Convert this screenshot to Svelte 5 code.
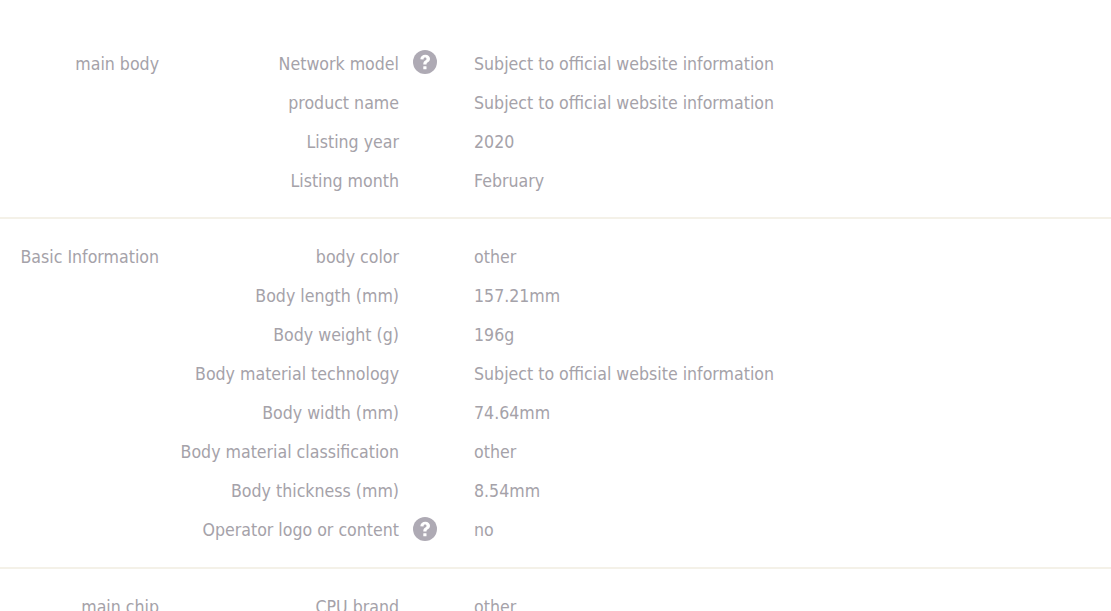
<script lang="ts">
  const official = 'Subject to official website information'

  const sections = [
    {
      title: 'main body',
      rows: [
        { name: 'Network model', value: official, help: true },
        { name: 'product name', value: official },
        { name: 'Listing year', value: '2020' },
        { name: 'Listing month', value: 'February' }
      ]
    },
    {
      title: 'Basic Information',
      rows: [
        { name: 'body color', value: 'other' },
        { name: 'Body length (mm)', value: '157.21mm' },
        { name: 'Body weight (g)', value: '196g' },
        { name: 'Body material technology', value: official },
        { name: 'Body width (mm)', value: '74.64mm' },
        { name: 'Body material classification', value: 'other' },
        { name: 'Body thickness (mm)', value: '8.54mm' },
        { name: 'Operator logo or content', value: 'no', help: true }
      ]
    },
    {
      title: 'main chip',
      rows: [{ name: 'CPU brand', value: 'other' }]
    }
  ]
</script>

<main class="params">
  {#each sections as section}
    <section class="group">
      <h3 class="group-title">{section.title}</h3>
      <dl class="rows">
        {#each section.rows as row}
          <div class="row">
            <dt class="name">
              {row.name}
              {#if row.help}
                <svg class="help" viewBox="0 0 24 24" aria-hidden="true">
                  <circle cx="12" cy="12" r="12" fill="#aeaab4" />
                  <path d="M7.300 9.300c.2-3 2.300-4.600 5-4.600 2.800 0 4.700 1.700 4.700 4 0 1.800-1 2.700-2.200 3.600-1 .7-1.300 1.100-1.300 2.200h-3.200c0-2 .6-2.900 1.900-3.900.9-.7 1.300-1.100 1.300-1.700 0-.8-.6-1.300-1.400-1.300-.9 0-1.500.6-1.600 1.800z" fill="#fff" />
                  <rect x="10.300" y="16.200" width="3.200" height="3.100" rx=".4" fill="#fff" />
                </svg>
              {/if}
            </dt>
            <dd class="value">{row.value}</dd>
          </div>
        {/each}
      </dl>
    </section>
  {/each}
</main>

<style>
  :global(body) {
    background: #fff;
    overflow: hidden;
  }

  .params {
    height: 611px;
    overflow: hidden;
    padding-top: 45px;
    box-sizing: border-box;
    font-family: "DejaVu Sans Condensed", "DejaVu Sans", sans-serif;
    font-stretch: condensed;
    font-size: 17.600px;
    line-height: 39px;
    color: #a5a2a9;
  }

  .group {
    display: flex;
    border-bottom: 2px solid #f4f1e8;
    padding-bottom: 16px;
    margin-bottom: 19px;
  }

  .group:nth-child(2) {
    padding-bottom: 17px;
  }

  .group:nth-child(2) .help {
    top: 6px;
  }

  .group-title {
    width: 159px;
    margin: 0;
    font-size: inherit;
    font-weight: normal;
    text-align: right;
  }

  .rows {
    margin: 0;
    flex: 1;
  }

  .row {
    display: flex;
    height: 39px;
  }

  .name {
    position: relative;
    width: 240px;
    text-align: right;
  }

  .help {
    position: absolute;
    left: 254px;
    top: 5px;
    width: 24px;
    height: 24px;
  }

  .value {
    margin: 0 0 0 75px;
  }
</style>
